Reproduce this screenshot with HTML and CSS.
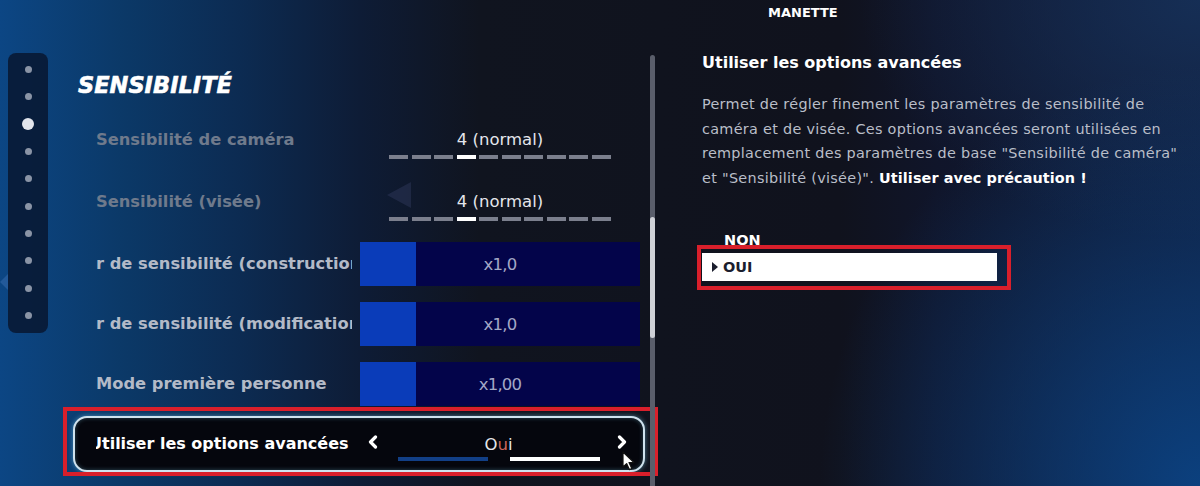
FILE: index.html
```html
<!DOCTYPE html>
<html lang="fr">
<head>
    <meta charset="UTF-8">
    <meta name="viewport" content="width=device-width, initial-scale=1.0">
    <title>Réglages - Manette</title>
    <link rel="stylesheet" href="styles.css">
</head>
<body>
    <div class="screen">
        <div class="tabs">
            <span class="tab">MANETTE</span>
        </div>

        <div class="main">
            <!-- section dots -->
            <nav class="rail">
                <span class="dot"></span>
                <span class="dot"></span>
                <span class="dot current"></span>
                <span class="dot"></span>
                <span class="dot"></span>
                <span class="dot"></span>
                <span class="dot"></span>
                <span class="dot"></span>
                <span class="dot"></span>
                <span class="dot"></span>
            </nav>

            <section class="settings">
                <h2 class="section-title">SENSIBILITÉ</h2>

                <div class="row disabled">
                    <div class="label">Sensibilité de caméra</div>
                    <div class="value">
                        <div class="value-text">4 (normal)</div>
                        <div class="steps">
                            <span></span><span></span><span></span><span class="on"></span><span></span>
                            <span></span><span></span><span></span><span></span><span></span>
                        </div>
                    </div>
                </div>

                <div class="row disabled">
                    <div class="label">Sensibilité (visée)</div>
                    <div class="value">
                        <div class="value-text">4 (normal)</div>
                        <div class="steps">
                            <span></span><span></span><span></span><span class="on"></span><span></span>
                            <span></span><span></span><span></span><span></span><span></span>
                        </div>
                    </div>
                </div>

                <div class="row">
                    <div class="label">r de sensibilité (construction)</div>
                    <div class="bar">
                        <div class="bar-fill" style="width: 20%"></div>
                        <span class="bar-text">x1,0</span>
                    </div>
                </div>

                <div class="row">
                    <div class="label">r de sensibilité (modification)</div>
                    <div class="bar">
                        <div class="bar-fill" style="width: 20%"></div>
                        <span class="bar-text">x1,0</span>
                    </div>
                </div>

                <div class="row">
                    <div class="label">Mode première personne</div>
                    <div class="bar">
                        <div class="bar-fill" style="width: 20%"></div>
                        <span class="bar-text">x1,00</span>
                    </div>
                </div>

                <div class="row selected">
                    <div class="label"><span class="scrolled">Utiliser les options avancées</span></div>
                    <div class="picker">
                        <svg class="arrow" width="10" height="14" viewBox="0 0 10 14">
                            <polyline points="7.5,2 2.5,7 7.5,12" fill="none" stroke="#fff" stroke-width="3.2" stroke-linecap="round" stroke-linejoin="round"/>
                        </svg>
                        <span class="picker-text">O<span class="tint">u</span>i</span>
                        <svg class="arrow" width="10" height="14" viewBox="0 0 10 14">
                            <polyline points="2.5,2 7.5,7 2.5,12" fill="none" stroke="#fff" stroke-width="3.2" stroke-linecap="round" stroke-linejoin="round"/>
                        </svg>
                        <div class="picker-steps">
                            <span class="off"></span>
                            <span class="on"></span>
                        </div>
                    </div>
                    <span class="mark mark-row"></span>
                    <svg class="cursor" width="14" height="20" viewBox="0 0 14 20">
                        <path d="M1 1 L1 16 L4.6 12.6 L7.4 18.6 L9.8 17.5 L7 11.6 L12 11.6 Z" fill="#fff" stroke="#111" stroke-width="1.2" stroke-linejoin="round"/>
                    </svg>
                </div>
            </section>

            <div class="scrollbar"><div class="thumb"></div></div>

            <aside class="details">
                <h3>Utiliser les options avancées</h3>
                <p>Permet de régler finement les paramètres de sensibilité de caméra et de visée. Ces options avancées seront utilisées en remplacement des paramètres de base "Sensibilité de caméra" et "Sensibilité (visée)". <strong>Utiliser avec précaution !</strong></p>

                <div class="options">
                    <div class="option">NON</div>
                    <div class="option active">
                        <span class="caret"></span>OUI
                        <span class="mark mark-option"></span>
                    </div>
                </div>
            </aside>
        </div>

        <!-- faint background shapes -->
        <span class="shard shard-a"></span>
        <span class="shard shard-b"></span>
    </div>
</body>
</html>
```

FILE: styles.css
```css
* {
    box-sizing: border-box;
}
html, body {
    margin: 0;
    padding: 0;
}
body {
    font-family: "DejaVu Sans", Verdana, sans-serif;
    color: white;
    background: #10121e;
    overflow: hidden;
}
.screen {
    position: relative;
    width: 1200px;
    height: 486px;
    overflow: hidden;
    background:
        radial-gradient(ellipse 380px 420px at 100% 100%, rgba(11, 66, 130, 0.95), rgba(11, 50, 100, 0) 100%),
        radial-gradient(ellipse 340px 240px at 100% 0%, rgba(22, 48, 88, 0.9), rgba(22, 48, 88, 0) 100%),
        linear-gradient(90deg, #0c4684 0%, #0b3968 10%, #0c2b52 20%, #0e1c36 30%, #10141f 40%, #10121d 70%, #10152a 78%, #111d3a 100%);
}

/* top tab bar */
.tabs {
    height: 24px;
    display: flex;
    align-items: center;
    padding-left: 768px;
}
.tab {
    font-size: 13px;
    font-weight: 700;
}

.main {
    display: flex;
    align-items: flex-start;
    padding-left: 8px;
    height: 462px;
}

/* section rail */
.rail {
    width: 40px;
    height: 280px;
    margin-top: 29px;
    padding-top: 3px;
    border-radius: 8px;
    background: rgba(8, 22, 48, 0.85);
    display: flex;
    flex-direction: column;
    align-items: center;
}
.dot {
    height: 27.3px;
    display: flex;
    align-items: center;
    justify-content: center;
}
.dot::before {
    content: "";
    width: 7px;
    height: 7px;
    border-radius: 50%;
    background: #8a94a6;
}
.dot.current::before {
    width: 12px;
    height: 12px;
    background: #e2e5ec;
}

/* settings list */
.settings {
    width: 572px;
    margin-left: 25px;
    display: flex;
    flex-direction: column;
    gap: 4px;
}
.section-title {
    margin: 52px 0 15px 5px;
    height: 17px;
    display: flex;
    align-items: center;
    font-size: 22.5px;
    font-weight: 700;
    font-style: italic;
    line-height: 26px;
    -webkit-text-stroke: 0.6px white;
}
.row {
    position: relative;
    height: 56px;
    display: flex;
    align-items: center;
    padding-left: 23px;
}
.row.disabled {
    height: 58px;
    align-items: flex-start;
    padding-top: 17px;
}
.label {
    width: 256px;
    margin-right: 8px;
    overflow: hidden;
    white-space: nowrap;
    font-size: 16.3px;
    font-weight: 700;
    line-height: 22px;
    color: #b3bac7;
}
.row.disabled .label {
    color: #6f7a8c;
}

/* slider value */
.value {
    width: 280px;
    display: flex;
    flex-direction: column;
    align-items: center;
}
.value-text {
    font-size: 16.5px;
    line-height: 22px;
    color: #e4e6ec;
}
.steps {
    display: flex;
    gap: 3.5px;
    margin-top: 4px;
}
.steps span {
    width: 19px;
    height: 4px;
    background: #7b7f8d;
}
.steps span.on {
    background: white;
}

/* multiplier bar */
.bar {
    position: relative;
    width: 280px;
    height: 44px;
    background: #03044a;
    display: flex;
    align-items: center;
    justify-content: center;
}
.bar-fill {
    position: absolute;
    left: 0;
    top: 0;
    bottom: 0;
    background: #0a3cb9;
}
.bar-text {
    position: relative;
    font-size: 16.5px;
    letter-spacing: -0.8px;
    color: #a3a8c6;
}

/* focused row */
.row.selected {
    border: 2px solid #cfe2ee;
    border-radius: 14px;
    background: #05060d;
    box-shadow: 0 0 5px rgba(120, 200, 230, 0.55), inset 0 0 4px rgba(120, 200, 230, 0.35);
    padding-left: 21px;
}
.row.selected .label {
    font-size: 16px;
    color: white;
}
.scrolled {
    display: inline-block;
    margin-left: -7px;
}
.picker {
    position: relative;
    width: 280px;
    height: 52px;
    display: flex;
    align-items: center;
    justify-content: space-between;
    padding: 0 13px 0 8px;
}
.arrow {
    display: block;
    margin-top: -4px;
}
.picker-text {
    font-size: 16.5px;
    color: #e6e6ea;
    margin-left: 2px;
}
.tint {
    color: #c9675c;
}
.picker-steps {
    position: absolute;
    left: 38px;
    bottom: 9px;
    display: flex;
    gap: 22px;
}
.picker-steps span {
    width: 90px;
    height: 4px;
}
.picker-steps .off {
    background: #123f86;
}
.picker-steps .on {
    background: white;
}
.cursor {
    position: absolute;
    left: 547px;
    top: 33px;
}

/* red highlight frames */
.mark {
    position: absolute;
    border: 4px solid #d91f2b;
    pointer-events: none;
}
.mark-row {
    left: -12px;
    right: -15px;
    top: -11px;
    bottom: -6px;
}

/* scrollbar */
.scrollbar {
    position: relative;
    width: 5px;
    height: 431px;
    margin-top: 31px;
    margin-left: 5px;
    border-radius: 3px 3px 0 0;
    background: #5a5e6b;
}
.thumb {
    position: absolute;
    left: 0;
    right: 0;
    top: 162px;
    height: 121px;
    border-radius: 3px;
    background: #cfd1d7;
}

/* description panel */
.details {
    width: 482px;
    margin-left: 47px;
}
.details h3 {
    margin: 28px 0 0;
    font-size: 16px;
    font-weight: 700;
    line-height: 22px;
}
.details p {
    margin: 18px 0 0;
    font-size: 14.4px;
    letter-spacing: 0.3px;
    line-height: 24.5px;
    color: #b9bec8;
}
.details strong {
    color: white;
    font-weight: 700;
    letter-spacing: 0.1px;
}
.options {
    margin-top: 42px;
}
.option {
    font-size: 14.5px;
    font-weight: 700;
    line-height: 16px;
    padding-left: 22px;
}
.option.active {
    position: relative;
    width: 295px;
    height: 28px;
    margin-top: 5px;
    padding-left: 10px;
    display: flex;
    align-items: center;
    gap: 5px;
    background: white;
    color: #1b1e2e;
}
.caret {
    width: 0;
    height: 0;
    border-top: 5px solid transparent;
    border-bottom: 5px solid transparent;
    border-left: 6px solid #1b1e2e;
}
.mark-option {
    left: -5px;
    right: -14px;
    top: -8px;
    bottom: -9px;
}

/* background shards */
.shard {
    position: absolute;
    width: 0;
    height: 0;
    pointer-events: none;
}
.shard-a {
    left: 387px;
    top: 182px;
    border-top: 13px solid transparent;
    border-bottom: 13px solid transparent;
    border-right: 24px solid rgba(60, 70, 110, 0.35);
}
.shard-b {
    left: 0;
    top: 274px;
    border-top: 8px solid transparent;
    border-bottom: 8px solid transparent;
    border-right: 8px solid rgba(70, 120, 190, 0.4);
}
```
